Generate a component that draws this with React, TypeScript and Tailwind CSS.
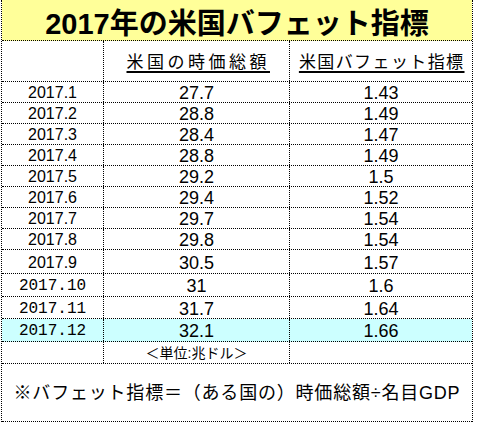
import React from "react";

type Row = {
  label: string;
  cap: string;
  ratio: string;
  h: string;
  mono?: boolean;
  cyan?: boolean;
};

const rows: Row[] = [
  { label: "2017.1", cap: "27.7", ratio: "1.43", h: "h-[21px]" },
  { label: "2017.2", cap: "28.8", ratio: "1.49", h: "h-[21px]" },
  { label: "2017.3", cap: "28.4", ratio: "1.47", h: "h-[21px]" },
  { label: "2017.4", cap: "28.8", ratio: "1.49", h: "h-[21px]" },
  { label: "2017.5", cap: "29.2", ratio: "1.5", h: "h-[21px]" },
  { label: "2017.6", cap: "29.4", ratio: "1.52", h: "h-[21px]" },
  { label: "2017.7", cap: "29.7", ratio: "1.54", h: "h-[21px]" },
  { label: "2017.8", cap: "29.8", ratio: "1.54", h: "h-[21px]" },
  { label: "2017.9", cap: "30.5", ratio: "1.57", h: "h-[24px]" },
  { label: "2017.10", cap: "31", ratio: "1.6", h: "h-[23px]", mono: true },
  { label: "2017.11", cap: "31.7", ratio: "1.64", h: "h-[22px]", mono: true },
  { label: "2017.12", cap: "32.1", ratio: "1.66", h: "h-[23px]", mono: true, cyan: true },
];

const sans = "font-['Liberation_Sans','Noto_Sans_CJK_JP',sans-serif]";

export default function App() {
  return (
    <div className={`w-[477px] h-[424px] bg-white text-black overflow-hidden ${sans}`}>
      <div className="ml-[1px] w-[472px] border-x border-dotted border-black flex flex-col">
        {/* Title */}
        <div className="h-[41px] bg-[#ffff99] border-b border-dotted border-black flex justify-center pt-[10px]">
          <span className="text-[29px] leading-none font-bold">2017年の米国バフェット指標</span>
        </div>
        {/* Header */}
        <div className="h-[41px] flex border-b border-dotted border-black">
          <div className="w-[102px] border-r border-dotted border-black" />
          <div className="w-[186px] border-r border-dotted border-black flex justify-center pt-[13px]">
            <span className="text-[17px] leading-none tracking-[3.5px] mr-[-3.5px] underline decoration-2 underline-offset-[3px]">
              米国の時価総額
            </span>
          </div>
          <div className="flex-1 flex justify-center pt-[13px]">
            <span className="text-[17px] leading-none tracking-[1.4px] mr-[-1.4px] underline decoration-2 underline-offset-[3px]">
              米国バフェット指標
            </span>
          </div>
        </div>
        {/* Data rows */}
        {rows.map((r) => (
          <div
            key={r.label}
            className={`${r.h} flex border-b border-dotted border-black ${r.cyan ? "bg-[#ccffff]" : ""}`}
          >
            <div className="w-[102px] border-r border-dotted border-black flex items-center justify-center pt-[2px]">
              <span
                className={
                  r.mono
                    ? "font-['Liberation_Mono',monospace] text-[16px] leading-none"
                    : "text-[16px] leading-none"
                }
              >
                {r.label}
              </span>
            </div>
            <div className="w-[186px] border-r border-dotted border-black flex items-center justify-center pt-[2px]">
              <span className="text-[18px] leading-none">{r.cap}</span>
            </div>
            <div className="flex-1 flex items-center justify-center pt-[2px]">
              <span className="text-[18px] leading-none">{r.ratio}</span>
            </div>
          </div>
        ))}
        {/* Unit row */}
        <div className="h-[22px] flex border-b border-dotted border-black">
          <div className="w-[102px] border-r border-dotted border-black" />
          <div className="w-[186px] border-r border-dotted border-black flex items-center justify-center">
            <span className="text-[14px] leading-none">＜単位:兆ドル＞</span>
          </div>
          <div className="flex-1" />
        </div>
        {/* Footer */}
        <div className="h-[58px] flex items-center justify-center border-b border-dotted border-black">
          <span className="text-[18px] leading-none tracking-[0.8px]">
            ※バフェット指標＝（ある国の）時価総額÷名目GDP
          </span>
        </div>
      </div>
    </div>
  );
}
